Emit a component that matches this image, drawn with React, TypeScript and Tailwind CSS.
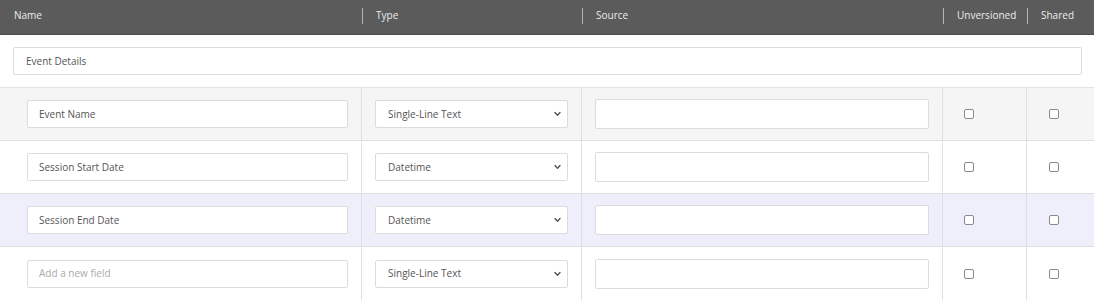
import React from "react";

const font = { fontFamily: '"Open Sans", "Liberation Sans", sans-serif' };

function Chevron() {
  return (
    <svg width="7" height="5" viewBox="0 0 7 5" className="absolute right-[6px] top-1/2 -translate-y-1/2">
      <path d="M1 1 L3.5 3.7 L6 1" fill="none" stroke="#555" strokeWidth="1.4" strokeLinecap="round" strokeLinejoin="round" />
    </svg>
  );
}

function Box() {
  return <span className="block w-[10px] h-[10px] border border-[#8a8a8a] rounded-[2px] bg-white" />;
}

type Row = { name: string; type: string; bg: string; placeholder?: boolean };

const rows: Row[] = [
  { name: "Event Name", type: "Single-Line Text", bg: "bg-[#f5f5f5] border-b border-[#dedee6]" },
  { name: "Session Start Date", type: "Datetime", bg: "bg-white border-b border-[#dedee6]" },
  { name: "Session End Date", type: "Datetime", bg: "bg-[#eeeffb] border-b border-[#dedee6]" },
  { name: "Add a new field", type: "Single-Line Text", bg: "bg-white", placeholder: true },
];

const gridCols = "grid grid-cols-[362px_220px_361px_84px_67px]";

export default function App() {
  return (
    <div className="w-[1094px] h-[300px] overflow-hidden bg-white text-[10px] text-[#555]" style={font}>
      <div className={`${gridCols} h-[35px] pb-[3px] bg-[#5b5b5b] border-b border-[#4a4a4a] text-[#ececec]`}>
        <div className="flex items-center pl-[14px]">Name</div>
        {["Type", "Source", "Unversioned", "Shared"].map((t) => (
          <div key={t} className="flex items-center">
            <span className="w-px h-[16px] bg-[#b5b5b5] mr-[13px]" />
            {t}
          </div>
        ))}
      </div>
      <div className="h-[53px] flex items-center pl-[13px] pr-[12px] border-b border-[#e2e2e2]">
        <div className="w-full h-[28px] border border-[#dcdcdc] rounded-[2px] flex items-center pl-[12px] bg-white">
          Event Details
        </div>
      </div>
      {rows.map((r, i) => (
        <div key={i} className={`${gridCols} h-[53px] ${r.bg}`}>
          <div className="flex items-center pl-[27px] pr-[13px] border-r border-[#e0e0e0]">
            <div className={`w-full h-[28px] border border-[#dcdcdc] rounded-[2px] bg-white flex items-center pl-[11px] ${r.placeholder ? "text-[#aaa]" : ""}`}>
              {r.name}
            </div>
          </div>
          <div className="flex items-center px-[13px] border-r border-[#e0e0e0]">
            <div className="relative w-full h-[28px] border border-[#dcdcdc] rounded-[2px] bg-white flex items-center pl-[12px]">
              {r.type}
              <Chevron />
            </div>
          </div>
          <div className="flex items-center px-[13px] border-r border-[#e0e0e0]">
            <div className="w-full h-[30px] border border-[#dcdcdc] rounded-[2px] bg-white" />
          </div>
          <div className="flex items-center pl-[21px] border-r border-[#e0e0e0]">
            <Box />
          </div>
          <div className="flex items-center pl-[22px]">
            <Box />
          </div>
        </div>
      ))}
    </div>
  );
}
